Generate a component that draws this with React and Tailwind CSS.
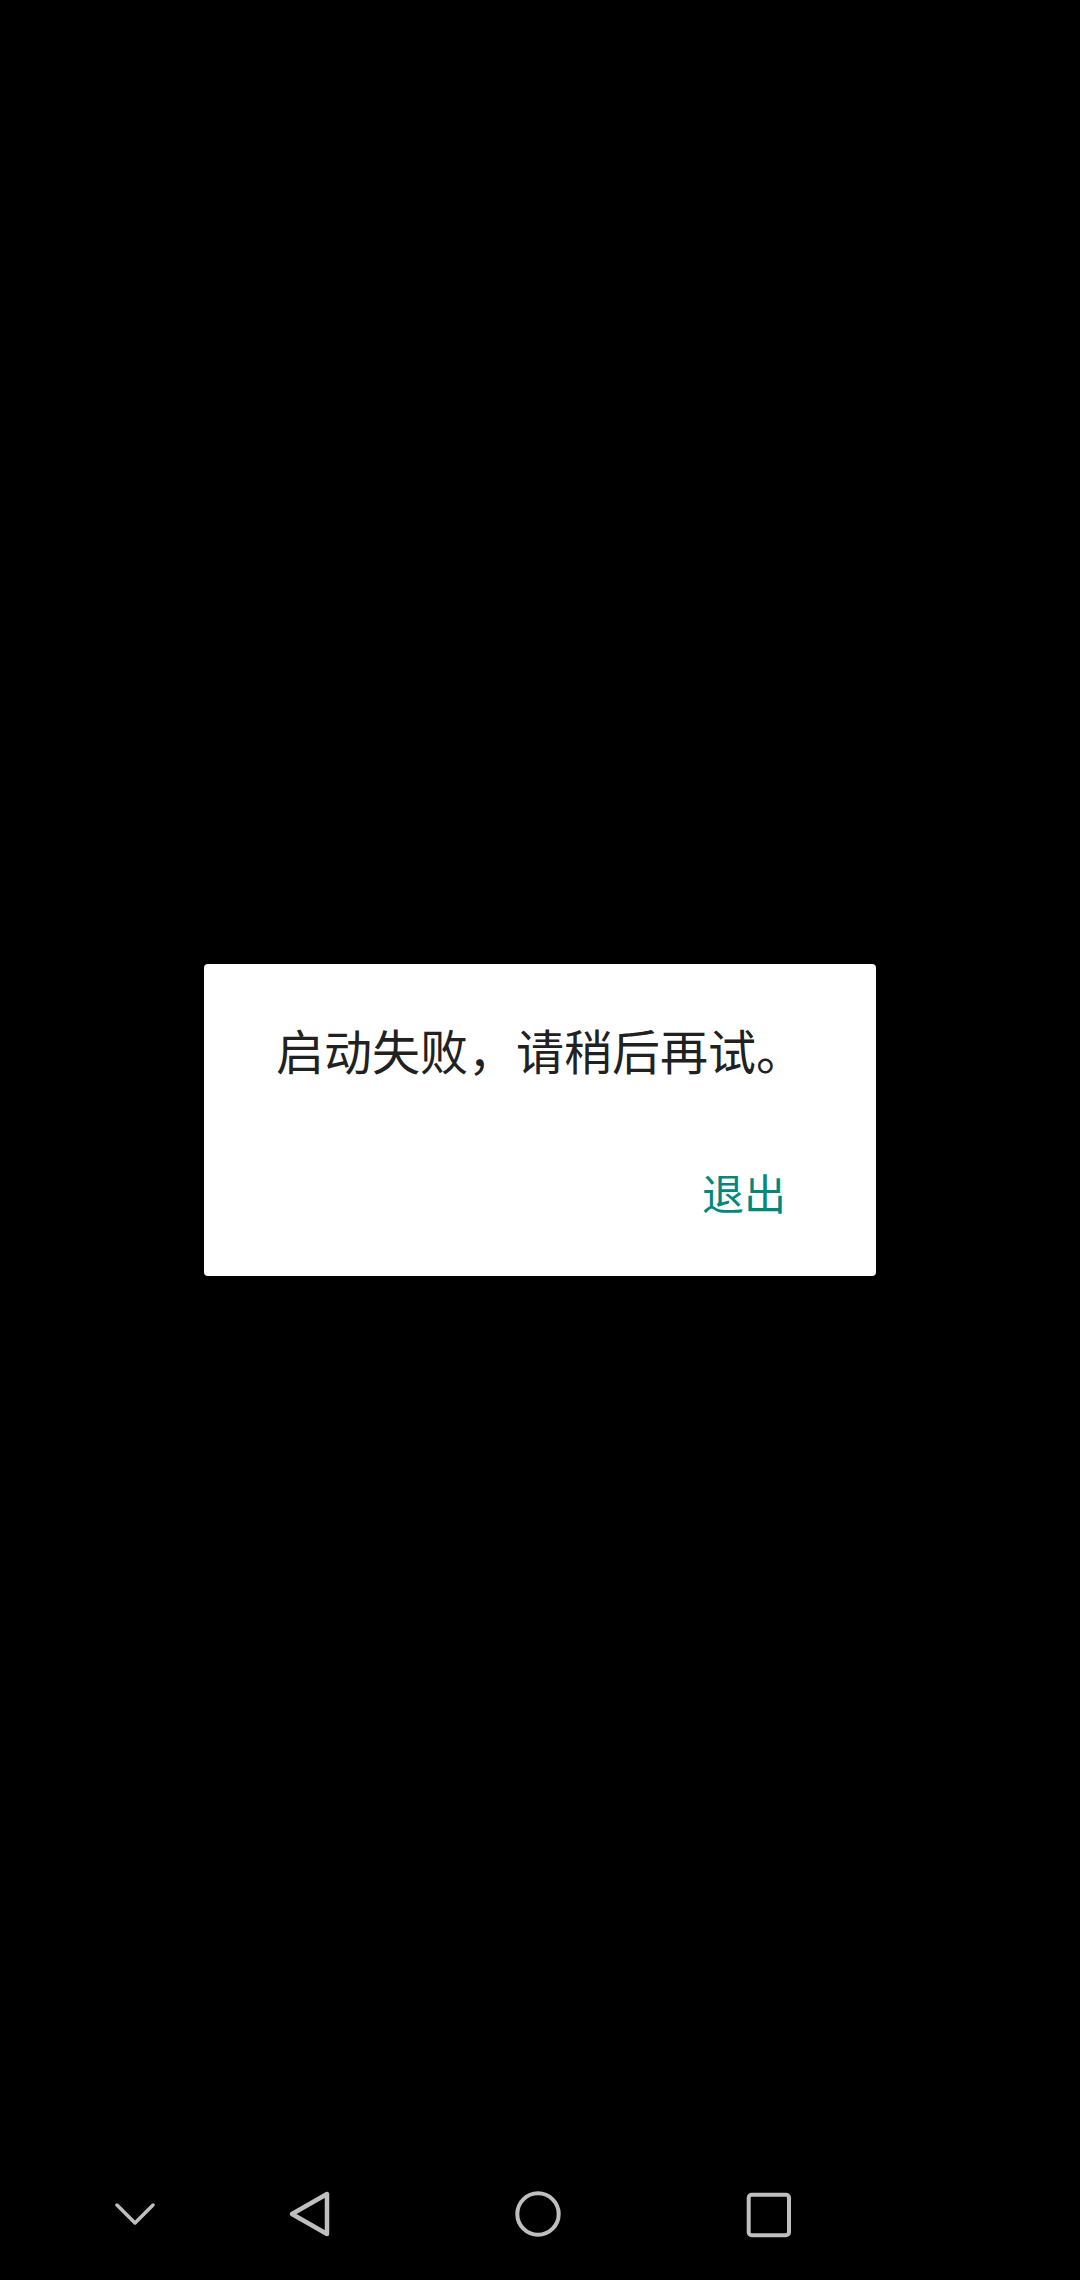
import React from "react";

const navStroke = "#bfbfbf";

function NavBar() {
  return (
    <div className="h-[132px] flex items-center pl-[95px]">
      {/* collapse */}
      <div className="w-[80px] flex justify-center">
        <svg width="40" height="40" viewBox="0 0 40 40" fill="none">
          <path d="M2 11 L20 29 L38 11" stroke={navStroke} strokeWidth="3.5" strokeLinecap="round" strokeLinejoin="round" />
        </svg>
      </div>
      {/* back */}
      <div className="w-[56px] ml-[105px] flex justify-center">
        <svg width="56" height="56" viewBox="0 0 56 56" fill="none">
          <path d="M47 8 L47 48 L12 28 Z" stroke={navStroke} strokeWidth="4.5" strokeLinejoin="round" />
        </svg>
      </div>
      {/* home */}
      <div className="w-[56px] ml-[174px] flex justify-center">
        <svg width="56" height="56" viewBox="0 0 56 56" fill="none">
          <circle cx="28" cy="28" r="20.7" stroke={navStroke} strokeWidth="4" />
        </svg>
      </div>
      {/* recents */}
      <div className="w-[56px] ml-[175px] flex justify-center">
        <svg width="56" height="56" viewBox="0 0 56 56" fill="none">
          <rect x="7.7" y="8.7" width="40.3" height="40.6" rx="3" stroke={navStroke} strokeWidth="4" />
        </svg>
      </div>
    </div>
  );
}

export default function App() {
  return (
    <div
      className="w-[1080px] h-[2280px] bg-black flex flex-col"
      style={{ fontFamily: '"Noto Sans CJK SC", "Noto Sans", sans-serif' }}
    >
      <div className="flex-1 pt-[964px]">
        <div className="ml-[204px] w-[672px] h-[312px] bg-white rounded-[4px] flex flex-col">
          <p className="pt-[53px] pl-[72px] text-[48px] leading-[64px] text-[#212121]">
            启动失败，请稍后再试。
          </p>
          <div className="flex justify-end pt-[83px] pr-[90px]">
            <button className="text-[42px] leading-[56px] text-[#00897b]">退出</button>
          </div>
        </div>
      </div>
      <NavBar />
    </div>
  );
}
